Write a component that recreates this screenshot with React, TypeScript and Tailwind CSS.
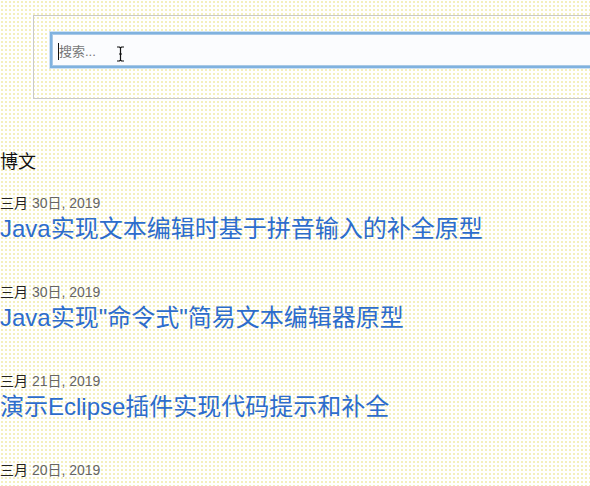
import React from "react"

const posts = [
  { month: "三月", day: "30日, 2019", title: "Java实现文本编辑时基于拼音输入的补全原型" },
  { month: "三月", day: "30日, 2019", title: "Java实现\"命令式\"简易文本编辑器原型" },
  { month: "三月", day: "21日, 2019", title: "演示Eclipse插件实现代码提示和补全" },
  { month: "三月", day: "20日, 2019", title: "" },
]

function IBeam() {
  return (
    <svg width="9" height="16" viewBox="0 0 9 16" className="absolute left-[64px] top-[12px]">
      <path d="M1 1h2.5l1 1 1-1H8M4.5 2v12M1 15h2.5l1-1 1 1H8M3 8h3" stroke="#111" strokeWidth="1.2" fill="none" />
    </svg>
  )
}

export default function App() {
  return (
    <div
      className="w-full h-[486px] overflow-hidden bg-white bg-[radial-gradient(#f4f0bd_0.8px,transparent_0.9px)] bg-[size:4px_4px] text-[#222]"
      style={{ fontFamily: '"Liberation Sans", "Noto Sans CJK SC", sans-serif' }}
    >
      <div className="ml-[33px] mt-[15px] mr-[-60px] border border-[#c9c9c9] pt-4 pb-[30px] pl-4">
        <div className="relative flex h-9 items-center border-2 border-[#7fb2df] bg-[#fbfcfe] pl-[6px] pt-[3px] shadow-[inset_0_0_0_1px_#a9c9e6,0_0_0_1px_#cfe2f3]">
          <span className="h-[17px] w-px bg-[#111]" />
          <span className="text-[13px] leading-[18px] text-[#777]">搜索...</span>
          <IBeam />
        </div>
      </div>

      <h2 className="mt-[51px] text-[18px] leading-6 text-[#111]">博文</h2>

      <div className="mt-[19px] flex flex-col gap-[37px]">
        {posts.map((p, i) => (
          <div key={i}>
            <div className="text-[14px] leading-5">
              <span className="text-[#222]">{p.month}</span>{" "}
              <span className="text-[#666]">{p.day}</span>
            </div>
            {p.title && <a className="block text-[24px] leading-8 text-[#2d6dcc]">{p.title}</a>}
          </div>
        ))}
      </div>
    </div>
  )
}
